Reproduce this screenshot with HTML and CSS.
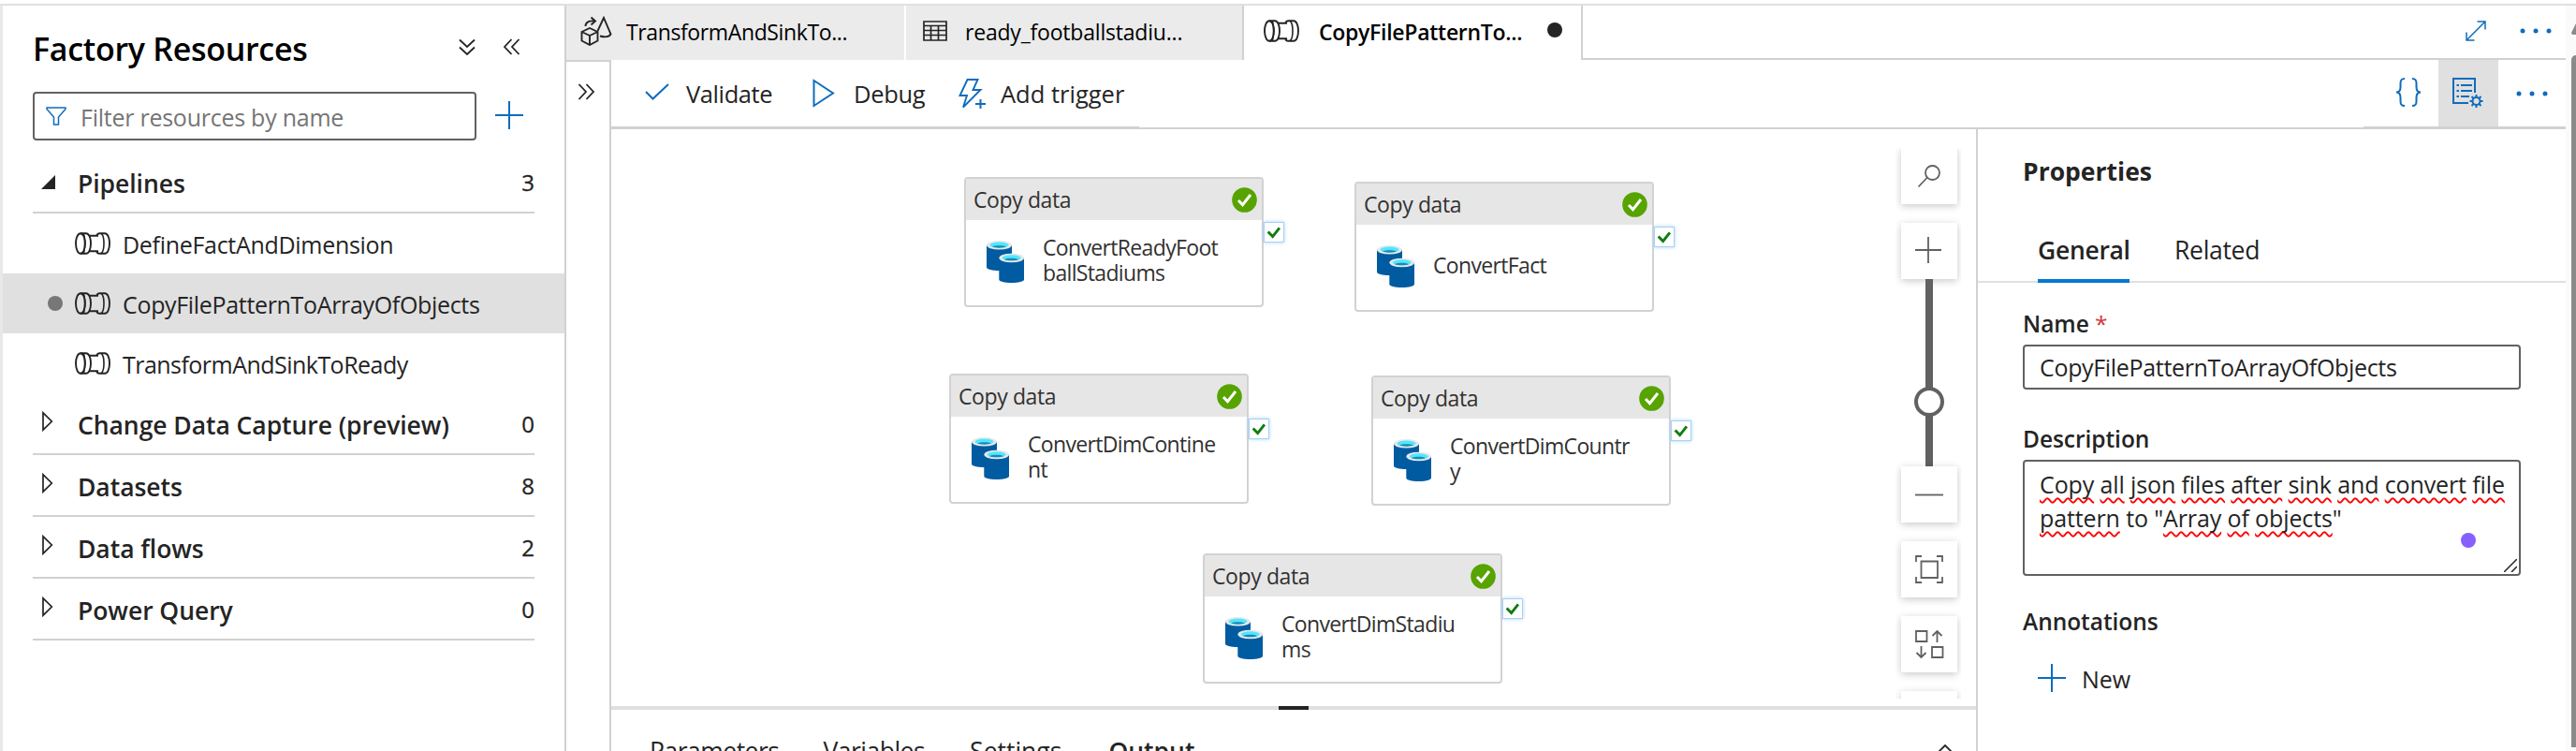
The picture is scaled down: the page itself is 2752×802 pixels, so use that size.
FILE: index.html
```html
<!DOCTYPE html>
<html lang="en">
<head>
<meta charset="utf-8">
<title>Factory Resources</title>
<link rel="stylesheet" href="styles.css">
</head>
<body>
<svg class="defs" width="0" height="0" aria-hidden="true">
  <symbol id="pipeline" viewBox="0 0 38 24">
    <g fill="none" stroke="currentColor" stroke-width="1.900">
      <ellipse cx="6" cy="12" rx="5" ry="10.8"/>
      <path d="M6 1.200h6c3 0 5 4.800 5 10.800s-2 10.800-5 10.800H6"/>
      <path d="M9 1.200c2 3 2 18.600 0 21.600" stroke-width="1.500"/>
      <path d="M15.500 3.800h9.500M15.500 20.200h9.500"/>
      <path d="M23.500 3.800c0-1.500 1-2.600 3-2.600h5.500c3 0 5 4.800 5 10.800s-2 10.800-5 10.800h-5.500c-2 0-3-1.100-3-2.600"/>
      <path d="M28 1.200c4 3 4 18.600 0 21.600" stroke-width="1.600"/>
    </g>
  </symbol>
  <symbol id="database" viewBox="0 0 40 45">
    <path fill="#005ba1" d="M0 4.500h27v24c0 2-6 3.500-13.500 3.500S0 30.500 0 28.500z"/>
    <ellipse cx="13.500" cy="4.800" rx="13.500" ry="4.800" fill="#e8e8e8"/>
    <ellipse cx="13.500" cy="4.600" rx="10" ry="3" fill="#50e6ff"/>
    <path fill="#198ab3" d="M6 6.500c3-1.800 12-1.800 15 0-3 1.500-12 1.500-15 0z"/>
    <path fill="#005ba1" d="M13.300 18.500H40v23c0 2-6 3.500-13.400 3.500s-13.300-1.500-13.300-3.500z"/>
    <ellipse cx="26.700" cy="18.500" rx="13.300" ry="4.800" fill="#e8e8e8"/>
    <ellipse cx="26.700" cy="18.300" rx="10" ry="3" fill="#50e6ff"/>
    <path fill="#198ab3" d="M19 20.200c3-1.800 12-1.800 15 0-3 1.500-12 1.500-15 0z"/>
  </symbol>
  <symbol id="success" viewBox="0 0 27 27">
    <circle cx="13.500" cy="13.500" r="13.300" fill="#57a300"/>
    <path d="M7 14l4.500 4.800L20 8" fill="none" stroke="#fff" stroke-width="3"/>
  </symbol>
  <symbol id="tick" viewBox="0 0 22 22">
    <path d="M4 10.500l5.500 5.500L17.500 6" fill="none" stroke="#107c10" stroke-width="3.200"/>
  </symbol>
  <symbol id="chevrons" viewBox="0 0 18 18">
    <path d="M8.500 1L1 9l7.500 8M16.500 1L9 9l7.500 8" fill="none" stroke="currentColor" stroke-width="1.800"/>
  </symbol>
  <symbol id="plus" viewBox="0 0 30 30">
    <path d="M15 0v30M0 15h30" fill="none" stroke="currentColor" stroke-width="2"/>
  </symbol>
  <symbol id="closed" viewBox="0 0 16 22">
    <path d="M1 1.800v18.400L10.300 11z" fill="none" stroke="currentColor" stroke-width="1.700"/>
  </symbol>
  <symbol id="dots" viewBox="0 0 34 6">
    <circle cx="3" cy="3" r="2.500"/><circle cx="17" cy="3" r="2.500"/><circle cx="31" cy="3" r="2.500"/>
  </symbol>
</svg>

<div class="app">
  <div class="edge"></div>

  <aside class="sidebar">
    <header class="side-head">
      <h1>Factory Resources</h1>
      <svg class="chev down"><use href="#chevrons"/></svg>
      <svg class="chev"><use href="#chevrons"/></svg>
    </header>
    <div class="filter">
      <div class="filter-box">
        <svg class="funnel" viewBox="0 0 22 20"><path d="M1 1h20v1.500L13.500 11v8h-5v-8L1 2.500z" fill="none" stroke="currentColor" stroke-width="1.500"/></svg>
        <span>Filter resources by name</span>
      </div>
      <svg class="plus"><use href="#plus"/></svg>
    </div>
    <div class="section">
      <svg class="arrow open" viewBox="0 0 15 15"><path d="M15 0v15H0z" fill="currentColor"/></svg>
      <b>Pipelines</b><span>3</span>
    </div>
    <ul class="items">
      <li><i class="mark"></i><svg class="pipe"><use href="#pipeline"/></svg><span>DefineFactAndDimension</span></li>
      <li class="selected"><i class="mark on"></i><svg class="pipe"><use href="#pipeline"/></svg><span>CopyFilePatternToArrayOfObjects</span></li>
      <li><i class="mark"></i><svg class="pipe"><use href="#pipeline"/></svg><span class="tight">TransformAndSinkToReady</span></li>
    </ul>
    <div class="section"><svg class="arrow"><use href="#closed"/></svg><b>Change Data Capture (preview)</b><span>0</span></div>
    <div class="section"><svg class="arrow"><use href="#closed"/></svg><b>Datasets</b><span>8</span></div>
    <div class="section"><svg class="arrow"><use href="#closed"/></svg><b>Data flows</b><span>2</span></div>
    <div class="section"><svg class="arrow"><use href="#closed"/></svg><b>Power Query</b><span>0</span></div>
  </aside>

  <main class="work">
    <nav class="tabs">
      <div class="tab first">
        <svg class="flow-icon" viewBox="0 0 34 32"><g fill="none" stroke="currentColor" stroke-width="1.900">
          <path d="M1.500 17l8.500-4 8.500 4v9.500L10 31l-8.500-4.500zM1.500 17l8.500 4 8.500-4M10 21v10"/>
          <path d="M18.500 16L25 2l7.500 17.500c-1.500 2.500-6 3.500-11.500 2"/>
          <path d="M5.500 11c0-4 3-6 9.500-5.500M11.500 1.500l4.500 4-4.500 4"/></g></svg>
        <span>TransformAndSinkTo...</span>
      </div>
      <div class="tab second">
        <svg class="grid-icon" viewBox="0 0 26 22"><path d="M1 1h24v20H1zM1 5.500h24M1 10.500h24M1 15.500h24M8.500 5.500V21M16.500 5.500V21" fill="none" stroke="currentColor" stroke-width="1.700"/></svg>
        <span>ready_footballstadiu...</span>
      </div>
      <div class="tab current">
        <svg class="pipe"><use href="#pipeline"/></svg>
        <span>CopyFilePatternTo...</span>
        <i class="dirty"></i>
      </div>
      <div class="tab-tools">
        <svg class="expand" viewBox="0 0 22 22"><path d="M1.500 20.500l19-19M12.500 1h8.500v8.500M1 12.500V21h8.500" fill="none" stroke="currentColor" stroke-width="1.500"/></svg>
        <svg class="dots"><use href="#dots"/></svg>
      </div>
    </nav>

    <div class="below">
      <div class="activities"><svg class="chev right"><use href="#chevrons"/></svg></div>
      <div class="editor">
        <div class="toolbar">
          <svg class="check" viewBox="0 0 26 18"><path d="M1 9l7.500 7.500L25 1" fill="none" stroke="currentColor" stroke-width="2"/></svg>
          <span class="validate">Validate</span>
          <svg class="play" viewBox="0 0 24 31"><path d="M1.500 2v27L22 15.500z" fill="none" stroke="currentColor" stroke-width="2"/></svg>
          <span class="debug">Debug</span>
          <svg class="bolt" viewBox="0 0 30 32"><path d="M9.500 1h11L15.500 12h8L5 30.500l4-12.500H1.500z" fill="none" stroke="currentColor" stroke-width="1.900"/><path d="M23.500 22v10M18 27h11" stroke="currentColor" stroke-width="2"/></svg>
          <span>Add trigger</span>
          <div class="right-tools">
            <svg class="braces" viewBox="0 0 28 31"><path d="M10 1C6 1 5.500 3 5.500 6v4c0 3-1.500 5.500-4.500 5.500 3 0 4.500 2.500 4.500 5.500v4c0 3 .5 5 4.500 5M18 1c4 0 4.500 2 4.500 5v4c0 3 1.500 5.500 4.500 5.500-3 0-4.500 2.500-4.500 5.500v4c0 3-.5 5-4.500 5" fill="none" stroke="currentColor" stroke-width="2"/></svg>
            <div class="prop-toggle">
              <svg viewBox="0 0 33 32"><g fill="none" stroke="currentColor" stroke-width="2"><path d="M17 27H1V1h23v15M9 8h12M9 14h12M9 20h9M4.500 8h2.500M4.500 14h2.500M4.500 20h2.500"/><circle cx="25.500" cy="25" r="4"/><path d="M25.500 18v3M25.500 29v3M18.500 25h3M29.500 25h3M20.500 20l2.200 2.200M28.300 27.800l2.200 2.200M20.500 30l2.200-2.200M28.300 22.200l2.200-2.200"/></g></svg>
            </div>
            <svg class="dots"><use href="#dots"/></svg>
          </div>
        </div>
        <div class="toolbar-rule"><i></i><i></i></div>

        <div class="stage">
          <div class="center">
            <div class="canvas">
              <article class="node n1"><header>Copy data<svg><use href="#success"/></svg></header><div class="node-body"><svg><use href="#database"/></svg><p>ConvertReadyFoot<br>ballStadiums</p></div><svg class="port"><use href="#tick"/></svg></article>
              <article class="node n2"><header>Copy data<svg><use href="#success"/></svg></header><div class="node-body"><svg><use href="#database"/></svg><p>ConvertFact</p></div><svg class="port"><use href="#tick"/></svg></article>
              <article class="node n3"><header>Copy data<svg><use href="#success"/></svg></header><div class="node-body"><svg><use href="#database"/></svg><p>ConvertDimContine<br>nt</p></div><svg class="port"><use href="#tick"/></svg></article>
              <article class="node n4"><header>Copy data<svg><use href="#success"/></svg></header><div class="node-body"><svg><use href="#database"/></svg><p>ConvertDimCountr<br>y</p></div><svg class="port"><use href="#tick"/></svg></article>
              <article class="node n5"><header>Copy data<svg><use href="#success"/></svg></header><div class="node-body"><svg><use href="#database"/></svg><p>ConvertDimStadiu<br>ms</p></div><svg class="port"><use href="#tick"/></svg></article>

              <div class="zoom">
                <div class="zbtn"><svg viewBox="0 0 60 60"><circle cx="33.500" cy="26.500" r="7.500"/><path d="M28 31.500L18.500 41.500"/></svg></div>
                <div class="zgroup">
                  <div class="zbtn"><svg viewBox="0 0 60 60"><path d="M29 15v28M15 29h28"/></svg></div>
                  <div class="track"><i></i></div>
                  <div class="zbtn"><svg viewBox="0 0 60 60"><path d="M15 30.500h30"/></svg></div>
                </div>
                <div class="zbtn"><svg viewBox="0 0 60 60"><path d="M21.500 21.500h17.500v17.500H21.500zM16 22v-6h6M38 16h6v6M44 38v6h-6M22 44h-6v-6"/></svg></div>
                <div class="zbtn"><svg viewBox="0 0 60 60"><path d="M16 16h11.500v11H16zM33 33h11.500v11H33zM38.500 28V16M33.500 21l5-5 5 5M21.500 32v12M16.500 39l5 5 5-5"/></svg></div>
                <div class="zbtn"></div>
              </div>
            </div>
            <div class="splitter"><i></i></div>
            <div class="output-tabs">
              <span>Parameters</span><span>Variables</span><span>Settings</span><b>Output</b>
              <svg viewBox="0 0 18 10"><path d="M1 9l8-8 8 8" fill="none" stroke="currentColor" stroke-width="1.800"/></svg>
            </div>
          </div>

          <section class="props">
            <h2>Properties</h2>
            <div class="prop-tabs"><b>General</b><span>Related</span></div>
            <div class="form">
              <label>Name <em>*</em></label>
              <div class="field">CopyFilePatternToArrayOfObjects</div>
              <label class="desc-label">Description</label>
              <div class="field area"><u>Copy</u> <u>all</u> <u>json</u> <u>files</u> <u>after</u> <u>sink</u> <u>and</u> <u>convert</u> <u>file</u><br><u>pattern</u> to "<u>Array</u> <u>of</u> <u>objects</u>"
                <i class="assist"></i>
                <svg class="grip" viewBox="0 0 14 14"><path d="M0 14L14 0M8 14l6-6" stroke="currentColor" stroke-width="1.500"/></svg>
              </div>
              <label class="ann-label">Annotations</label>
              <div class="new"><svg class="plus"><use href="#plus"/></svg><span>New</span></div>
            </div>
          </section>
        </div>
      </div>
    </div>
  </main>

  <div class="scroll"><svg viewBox="0 0 5 12"><path d="M5 0v12H1.500Q-.5 11 .5 9z" fill="#8a8a8a"/></svg><i></i></div>
</div>
</body>
</html>
```
FILE: styles.css
```css
* { box-sizing: border-box; }
body {
  margin: 0;
  width: 2752px;
  height: 802px;
  overflow: hidden;
  background: #fff;
  color: #242424;
  font: 25px/36px "Open Sans", "Noto Sans", sans-serif;
}
h1, h2, p, ul { margin: 0; padding: 0; }
svg { display: block; flex: none; }
b { font-weight: 600; }
.defs { position: absolute; }

.app {
  display: flex;
  height: 798px;
  border-top: 2px solid #e0e0e0;
  margin-top: 4px;
}
.edge { width: 3px; background: #e8e8e8; }

/* Resource list */
.sidebar {
  width: 602px;
  border-right: 2px solid #d1d1d1;
  flex: none;
}
.side-head {
  display: flex;
  height: 92px;
  padding: 10px 47px 0 32px;
}
.side-head h1 {
  flex: 1;
  color: #000;
  font-size: 34px;
  font-weight: 600;
  line-height: 73px;
  letter-spacing: -0.3px;
}
.chev { width: 18px; height: 18px; margin-top: 25px; }
.chev.down { transform: rotate(-90deg); margin-right: 30px; }
.filter { display: flex; height: 64px; padding-left: 32px; }
.filter-box {
  display: flex;
  align-items: center;
  width: 474px;
  height: 52px;
  padding-left: 12px;
  border: 2px solid #616161;
  border-radius: 4px;
  color: #757575;
  letter-spacing: -0.25px;
}
.filter-box span { margin: 2px 0 0 15px; }
.funnel { width: 22px; height: 20px; color: #0f6cbd; }
.plus { width: 30px; height: 30px; color: #0f6cbd; }
.filter .plus { margin: 10px 0 0 20px; }
.section {
  display: flex;
  align-items: center;
  height: 66px;
  width: 536px;
  margin-left: 32px;
  padding-top: 3px;
  border-bottom: 2px solid #d1d1d1;
  font-size: 26.5px;
}
.section b { flex: 1; letter-spacing: -0.05px; }
.section span { font-size: 24px; margin-top: -2px; -webkit-text-stroke: .3px; }
.arrow { width: 16px; height: 22px; margin: -7px 22px 0 10px; }
.arrow.open { width: 15px; height: 15px; margin: -3px 24px 0 9px; }
.items { list-style: none; }
.items li {
  display: flex;
  align-items: center;
  height: 64px;
  padding-left: 48px;
  letter-spacing: -0.3px;
}
.items li.selected { background: #e0e0e0; letter-spacing: -0.33px; }
.items span { margin: 2px 0 0 13px; }
.items .tight { letter-spacing: -0.53px; }
.pipe { width: 38px; height: 24px; }
.mark { width: 16px; height: 16px; margin-right: 13px; border-radius: 50%; }
.mark.on { background: #797775; }

/* Editor tabs */
.work { display: flex; flex-direction: column; width: 2136px; }
.tabs { display: flex; height: 58px; flex: none; }
.tab {
  display: flex;
  align-items: center;
  background: #ebebeb;
  color: #000;
  font-size: 23px;
  letter-spacing: -0.38px;
}
.tab svg { color: #242424; margin-bottom: 4px; }
.tab span { margin-bottom: 2px; }
.first { width: 363px; padding-left: 15px; border-right: 2px solid #fff; }
.flow-icon { width: 34px; height: 32px; margin-right: 15px; }
.second { width: 359px; padding-left: 18px; letter-spacing: -0.2px; }
.grid-icon { width: 26px; height: 22px; margin-right: 19px; }
.current {
  width: 364px;
  padding-left: 21px;
  background: #fff;
  border: solid #d1d1d1;
  border-width: 0 2px;
  font-weight: 600;
  letter-spacing: -0.28px;
}
.current span { width: 220px; margin-left: 21px; white-space: nowrap; }
.dirty { width: 16px; height: 16px; margin: 0 0 6px 24px; border-radius: 50%; background: #242424; }
.tab-tools {
  flex: 1;
  display: flex;
  align-items: center;
  justify-content: flex-end;
  padding: 0 15px 3px 0;
  border-bottom: 2px solid #d1d1d1;
  color: #0f6cbd;
}
.expand { width: 22px; height: 22px; margin-right: 36px; }
.dots { width: 34px; height: 6px; fill: #0f6cbd; }

.below { display: flex; flex: 1; }
.activities {
  width: 48px;
  border-top: 2px solid #d1d1d1;
  border-right: 2px solid #d1d1d1;
}
.activities .chev { transform: scaleX(-1); margin: 23px 0 0 12px; }
.editor { flex: 1; }

/* Toolbar */
.toolbar {
  display: flex;
  align-items: center;
  height: 71px;
  padding-left: 36px;
  font-size: 25.5px;
}
.toolbar > span { margin-top: 1px; }
.toolbar > svg { color: #0f6cbd; }
.check { width: 26px; height: 18px; margin: -4px 18px 0 0; }
.validate { width: 135px; letter-spacing: -0.4px; }
.play { width: 24px; height: 31px; margin-right: 20px; }
.debug { width: 112px; letter-spacing: -0.3px; }
.bolt { width: 30px; height: 32px; margin-right: 15px; }
.right-tools {
  display: flex;
  align-items: center;
  align-self: stretch;
  margin-left: auto;
  padding-right: 19px;
  color: #0f6cbd;
}
.braces { width: 28px; height: 31px; margin: -3px 18px 0 0; }
.prop-toggle {
  width: 64px;
  align-self: stretch;
  margin-right: 19px;
  padding: 19px 0 0 15px;
  background: #e0e0e0;
}
.prop-toggle svg { width: 33px; height: 32px; }
.toolbar-rule {
  display: flex;
  justify-content: space-between;
  height: 3px;
  border-bottom: 2px solid #d1d1d1;
}
.toolbar-rule i { width: 564px; height: 1px; background: #d1d1d1; }
.toolbar-rule i + i { width: 216px; }

/* Canvas */
.stage { display: flex; height: 664px; }
.center { width: 1458px; }
.canvas { position: relative; height: 616px; }
.node {
  position: absolute;
  width: 320px;
  height: 139px;
  background: #fff;
  border: 2px solid #d2d2d2;
  border-radius: 4px;
  color: #323130;
  font-size: 23px;
  line-height: 27px;
}
.n1 { left: 377px; top: 51px; }
.n2 { left: 794px; top: 56px; }
.n3 { left: 361px; top: 261px; }
.n4 { left: 812px; top: 263px; }
.n5 { left: 632px; top: 453px; }
.node header {
  display: flex;
  align-items: center;
  justify-content: space-between;
  height: 44px;
  padding: 0 5px 0 8px;
  background: #e6e6e6;
  letter-spacing: -0.4px;
}
.node header svg { width: 27px; height: 27px; }
.node-body { display: flex; align-items: center; height: 86px; padding-left: 22px; }
.node-body svg { width: 40px; height: 45px; margin-top: 2px; }
.node p { margin-left: 20px; letter-spacing: -0.66px; }
.port {
  position: absolute;
  left: 318px;
  top: 46px;
  width: 22px;
  height: 22px;
  background: #fff;
  border: 1px solid #a9d0f5;
  box-shadow: 0 0 4px #a9d3f8;
}

.zoom {
  position: absolute;
  left: 1372px;
  top: 20px;
  display: flex;
  flex-direction: column;
  gap: 20px;
  width: 70px;
  height: 588px;
  padding-left: 6px;
  overflow: hidden;
}
.zbtn { width: 60px; height: 60px; flex: none; background: #fff; box-shadow: 0 2px 8px rgba(0, 0, 0, .22); }
.zbtn svg { width: 60px; height: 60px; fill: none; stroke: #616161; stroke-width: 1.8; }
.zgroup { flex: none; width: 60px; }
.track { display: flex; justify-content: center; align-items: center; height: 200px; background: linear-gradient(#616161, #616161) 26px 0 / 8px 200px no-repeat; }
.track i { width: 32px; height: 32px; margin-top: 61px; border: 4px solid #616161; border-radius: 50%; background: #fff; }

.splitter { height: 4px; background: #e0e0e0; }
.splitter i { display: block; width: 32px; height: 4px; margin-left: 713px; background: #242424; }
.output-tabs {
  display: flex;
  height: 44px;
  padding: 26px 22px 0 41px;
  font-size: 26.5px;
  letter-spacing: -0.5px;
}
.output-tabs span { margin-right: 47px; }
.output-tabs span:nth-child(2) { margin-right: 48px; }
.output-tabs span:nth-child(3) { margin-right: 50px; letter-spacing: 0; }
.output-tabs b { letter-spacing: 0; }
.output-tabs svg { width: 18px; height: 10px; margin: 11px 2px 0 auto; }

/* Properties */
.props { flex: 1; border-left: 2px solid #d1d1d1; }
.props h2 { padding: 27px 0 0 48px; font-size: 26.5px; font-weight: 700; line-height: 36px; }
.prop-tabs {
  display: flex;
  height: 64px;
  margin-top: 37px;
  padding-left: 64px;
  border-bottom: 2px solid #e0e0e0;
  font-size: 26.5px;
  line-height: 58px;
  letter-spacing: -0.3px;
}
.prop-tabs b { height: 64px; width: 98px; margin-right: 48px; border-bottom: 4px solid #0078d4; }
.form { padding: 24px 48px 0 48px; }
label { display: block; height: 42px; line-height: 40px; font-size: 24.5px; font-weight: 600; letter-spacing: -0.05px; }
label em { color: #d13438; font-style: normal; font-weight: 400; }
.field {
  height: 48px;
  padding-left: 16px;
  border: 2px solid #616161;
  border-radius: 4px;
  line-height: 45px;
  letter-spacing: -0.33px;
  white-space: nowrap;
}
.desc-label { margin-top: 33px; }
.area { position: relative; height: 124px; padding-top: 6px; line-height: 36px; letter-spacing: -0.12px; }
.area u {
  text-decoration: underline wavy #f00;
  text-decoration-thickness: 2px;
  text-underline-offset: 4px;
  text-decoration-skip-ink: none;
}
.assist { position: absolute; right: 46px; bottom: 28px; width: 16px; height: 16px; border-radius: 50%; background: #8661ff; }
.grip { position: absolute; right: 2px; bottom: 2px; width: 14px; height: 14px; }
.ann-label { margin-top: 29px; }
.new { display: flex; align-items: center; margin: 20px 0 0 16px; height: 36px; }
.new span { margin: 1px 0 0 17px; }

.scroll { width: 11px; padding: 19px 0 0 6px; background: #fafafa; }
.scroll svg { width: 5px; height: 12px; }
.scroll i { display: block; width: 5px; height: 739px; margin-top: 22px; border-radius: 5px 0 0 0; background: #8a8a8a; }
```
